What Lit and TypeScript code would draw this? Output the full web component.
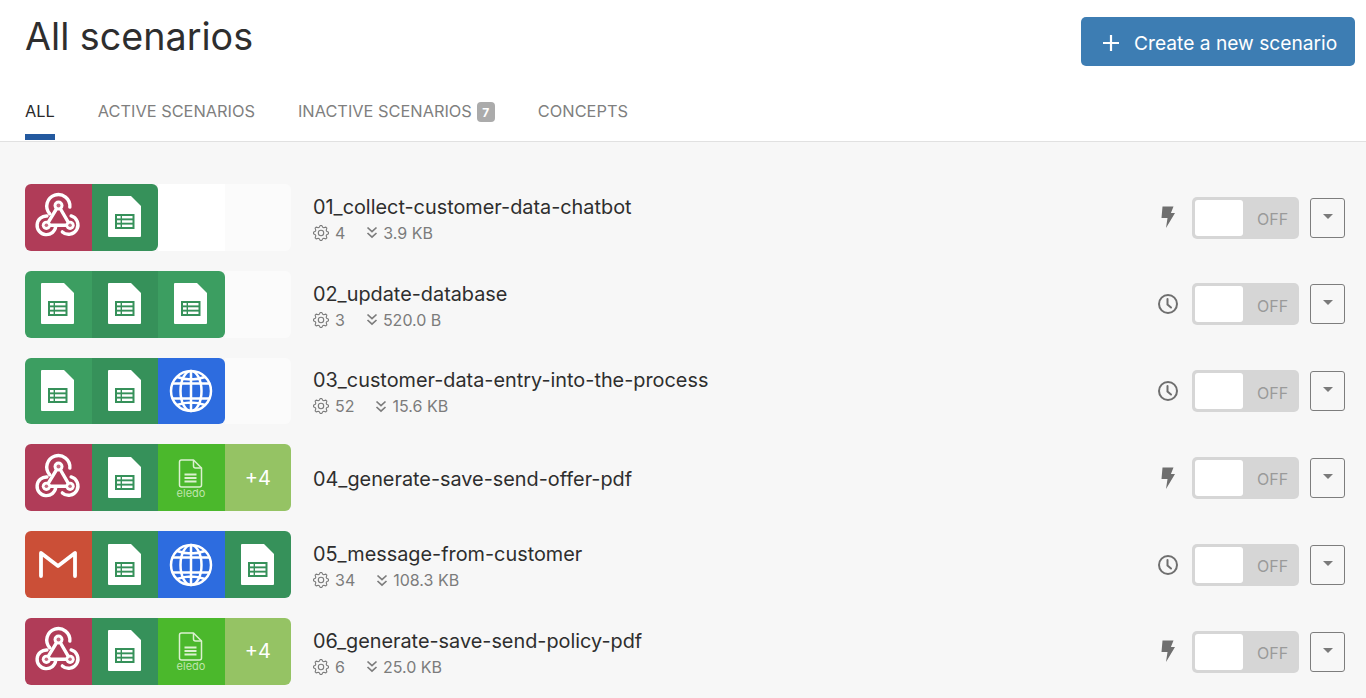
import { LitElement, css, html, svg } from "lit";
import { customElement } from "lit/decorators.js";

type Tile = "hook" | "sheet" | "web" | "eledo" | "gmail" | "more" | "";

interface Scenario {
  name: string;
  tiles: Tile[];
  ops?: string;
  size?: string;
  trigger: "bolt" | "clock";
}

const scenarios: Scenario[] = [
  { name: "01_collect-customer-data-chatbot", tiles: ["hook", "sheet", "", ""], ops: "4", size: "3.9 KB", trigger: "bolt" },
  { name: "02_update-database", tiles: ["sheet", "sheet", "sheet", ""], ops: "3", size: "520.0 B", trigger: "clock" },
  { name: "03_customer-data-entry-into-the-process", tiles: ["sheet", "sheet", "web", ""], ops: "52", size: "15.6 KB", trigger: "clock" },
  { name: "04_generate-save-send-offer-pdf", tiles: ["hook", "sheet", "eledo", "more"], trigger: "bolt" },
  { name: "05_message-from-customer", tiles: ["gmail", "sheet", "web", "sheet"], ops: "34", size: "108.3 KB", trigger: "clock" },
  { name: "06_generate-save-send-policy-pdf", tiles: ["hook", "sheet", "eledo", "more"], ops: "6", size: "25.0 KB", trigger: "bolt" },
];

const icons: Record<string, unknown> = {
  hook: svg`<g transform="translate(28.500 27.500) scale(1.1) translate(-28.500 -27)">
    <g fill="none" stroke="#fff" stroke-width="3.100" stroke-linecap="round">
      <path d="M20.500 24.500A10.500 10.500 0 1 1 38.800 18.500"/>
      <path d="M28.500 17L39 35"/>
      <path d="M28.500 17L17.500 35"/>
      <path d="M17.500 35H39"/>
      <path d="M18 26.500A8.500 8.500 0 1 0 26 36"/>
      <path d="M40 26.500A8.500 8.500 0 1 1 32 41"/>
    </g>
    <g fill="#fff"><circle cx="28.500" cy="17" r="4.500"/><circle cx="17.500" cy="35" r="4.200"/><circle cx="39" cy="35" r="4.200"/></g>
    <g fill="#c66a80"><circle cx="28.500" cy="17" r="1.800"/><circle cx="17.500" cy="35" r="1.600"/><circle cx="39" cy="35" r="1.600"/></g>
  </g>`,
  sheet: svg`<path d="M12 7h22l10 10v30a1 1 0 0 1-1 1H12a1 1 0 0 1-1-1V8a1 1 0 0 1 1-1z" fill="#fff"/>
  <rect x="18" y="25" width="19.500" height="15" fill="#36915a"/>
  <g fill="#fff"><rect x="20" y="27" width="3.600" height="2.400"/><rect x="25" y="27" width="10.500" height="2.400"/><rect x="20" y="31.300" width="3.600" height="2.400"/><rect x="25" y="31.300" width="10.500" height="2.400"/><rect x="20" y="35.600" width="3.600" height="2.400"/><rect x="25" y="35.600" width="10.500" height="2.400"/></g>`,
  web: svg`<g fill="none" stroke="#fff" stroke-width="2.500">
    <circle cx="28" cy="28" r="20"/>
    <ellipse cx="28" cy="28" rx="10.500" ry="20"/>
    <path d="M28 8v40M9 20.500h38M9 35.500h38M14 14q14 5 28 0M14 42q14-5 28 0"/>
  </g>`,
  eledo: svg`<g fill="none" stroke="#dcf1d0" stroke-width="1.500" stroke-linejoin="round">
    <path d="M18.500 10h12l8 8v17a2 2 0 0 1-2 2h-18a2 2 0 0 1-2-2V12a2 2 0 0 1 2-2z"/>
    <path d="M30.500 10v6a2 2 0 0 0 2 2h6"/>
    <path d="M21.500 24.500h12M21.500 28h12M21.500 31.500h12" stroke-width="1.800"/>
  </g>
  <text x="28" y="46.500" class="eledo-text" text-anchor="middle">eledo</text>`,
  gmail: svg`<path d="M11 39V16l17 13 17-13v23" fill="none" stroke="#fff" stroke-width="3.800" stroke-linecap="round" stroke-linejoin="round"/>`,
};

// scalloped gear outline for the operations count
function gearPath() {
  const pts: string[] = [];
  for (let i = 0; i < 32; i++) {
    const r = i % 4 < 2 ? 7.6 : 5.9;
    const a = ((i - 0.5) / 32) * Math.PI * 2;
    pts.push(`${(8 + r * Math.cos(a)).toFixed(2)} ${(8 + r * Math.sin(a)).toFixed(2)}`);
  }
  return `M${pts.join("L")}Z`;
}

@customElement("app-root")
export class AppRoot extends LitElement {
  static styles = css`
    :host {
      display: block;
      height: 698px;
      overflow: hidden;
      background: #f7f7f7;
      font-family: Inter, "Liberation Sans", sans-serif;
      color: #2e2e2e;
    }

    .head {
      background: #fff;
      border-bottom: 1px solid #e1e1e1;
      height: 142px;
      box-sizing: border-box;
      padding: 0 11px 0 25px;
    }

    .top {
      display: flex;
      justify-content: space-between;
      height: 89px;
    }

    h1 {
      margin: 13px 0 0;
      font-size: 37.7px;
      line-height: 46px;
      font-weight: 400;
    }

    .create {
      display: flex;
      align-items: center;
      box-sizing: border-box;
      margin-top: 17px;
      width: 274px;
      height: 49px;
      padding: 2px 0 0 21px;
      gap: 14px;
      border: 0;
      border-radius: 5px;
      background: #3d7db3;
      color: #fff;
      font: inherit;
      font-size: 19.2px;
    }

    .tabs {
      display: flex;
      gap: 43px;
      font-size: 16.37px;
      color: #7f7f7f;
    }

    .tab {
      display: flex;
      align-items: flex-start;
      height: 51px;
      box-sizing: border-box;
      padding-top: 13px;
      line-height: 19px;
    }

    .tab.on {
      color: #2a2a2a;
      border-bottom: 6px solid #23599f;
    }

    .count {
      margin-left: 5px;
      width: 18px;
      height: 20px;
      border-radius: 4px;
      background: #ababab;
      color: #fff;
      font-size: 12px;
      font-weight: 700;
      line-height: 21px;
      text-align: center;
    }

    .list {
      display: flex;
      flex-direction: column;
      gap: 20px;
      padding: 42px 21px 0 25px;
    }

    .row {
      display: flex;
      align-items: center;
      height: 66.8px;
    }

    .tiles {
      display: grid;
      grid-template-columns: repeat(4, 66.5px);
      height: 100%;
      margin-right: 22px;
      border-radius: 6px;
      overflow: hidden;
      flex: none;
    }

    .tile {
      position: relative;
      display: flex;
      align-items: center;
      justify-content: center;
      color: #fff;
      font-size: 20px;
    }

    .tile svg {
      width: 56px;
      height: 56px;
    }

    .eledo-text {
      font-size: 11px;
      fill: #bfe5ab;
    }

    .hook { background: #b03c58; }
    .sheet { background: #3c9e61; }
    .web { background: #2d6cdf; }
    .eledo { background: #4bb82c; }
    .gmail { background: #cb4f37; }
    .more { background: #95c364; }
    .blank { background: #fff; }
    .tile:nth-child(even).sheet { background: #36915a; }
    .tile:nth-child(even).blank { background: #fbfbfb; }
    .tile.round-end { border-radius: 0 6px 6px 0; }

    .info {
      flex: 1;
      min-width: 0;
      padding-top: 2px;
    }

    .name {
      font-size: 19.85px;
      line-height: 24px;
    }

    .meta {
      display: flex;
      align-items: center;
      margin: 2px 0 -3px;
      font-size: 16px;
      line-height: 24px;
      color: #7c7c7c;
    }

    .meta svg {
      flex: none;
    }

    .ops {
      margin-left: 6px;
      margin-right: 21px;
    }

    .size {
      margin-left: 5px;
    }

    .trigger {
      display: flex;
      justify-content: center;
      width: 22px;
      margin-right: 13px;
    }

    .switch {
      display: flex;
      align-items: center;
      box-sizing: border-box;
      width: 107px;
      height: 42px;
      margin-top: 0.4px;
      padding: 3px;
      border-radius: 5px;
      background: #d6d6d6;
      color: #9a9a9a;
      font-size: 16px;
    }

    .knob {
      width: 48px;
      height: 36px;
      border-radius: 3px;
      background: #fff;
    }

    .off {
      margin-left: 14px;
      margin-top: 3px;
    }

    .menu {
      display: flex;
      align-items: center;
      justify-content: center;
      box-sizing: border-box;
      width: 35px;
      height: 40px;
      margin: 0.4px 0 0 11px;
      padding: 0 0 3px;
      border: 1px solid #7d7d7d;
      border-radius: 3px;
      background: transparent;
    }

    .caret {
      width: 0;
      height: 0;
      border-left: 5px solid transparent;
      border-right: 5px solid transparent;
      border-top: 5px solid #7a7a7a;
    }
  `;

  renderTile(tile: Tile, i: number, tiles: Tile[]) {
    // the rounded end of the filled part sits on the last tile that has an icon
    const lastFilled = tile !== "" && tiles[i + 1] === "";
    const cls = `tile ${tile || "blank"} ${lastFilled ? "round-end" : ""}`;
    if (tile === "more") return html`<div class=${cls}>+4</div>`;
    if (tile === "") return html`<div class=${cls}></div>`;
    return html`<div class=${cls}><svg viewBox="0 0 56 56">${icons[tile]}</svg></div>`;
  }

  renderTrigger(kind: "bolt" | "clock") {
    if (kind === "bolt") {
      return html`<svg width="16" height="24" viewBox="0 0 16 24"><path d="M2.500 1.500h11l-2.600 6.500H15L6 23l1.500-10H1.500z" fill="#6f6f6f"/></svg>`;
    }
    return html`<svg width="20" height="20" viewBox="0 0 20 20" fill="none" stroke="#6f6f6f" stroke-width="2"><circle cx="10" cy="10" r="9"/><path d="M9.500 5v5.500l3.500 3" stroke-linecap="round"/></svg>`;
  }

  renderRow(s: Scenario) {
    return html`
      <div class="row">
        <div class="tiles">${s.tiles.map((t, i) => this.renderTile(t, i, s.tiles))}</div>
        <div class="info">
          <div class="name">${s.name}</div>
          ${s.ops
            ? html`<div class="meta">
                <svg width="16" height="16" viewBox="0 0 16 16" fill="none" stroke="#7c7c7c" stroke-width="1.100" stroke-linejoin="round"><path d=${gearPath()}/><circle cx="8" cy="8" r="2.700"/></svg>
                <span class="ops">${s.ops}</span>
                <svg width="12" height="13" viewBox="0 0 12 13" fill="none" stroke="#7c7c7c" stroke-width="1.700"><path d="M1.500 1.500L6 5.700l4.500-4.200M1.500 7L6 11.200 10.500 7"/></svg>
                <span class="size">${s.size}</span>
              </div>`
            : ""}
        </div>
        <div class="trigger">${this.renderTrigger(s.trigger)}</div>
        <div class="switch"><div class="knob"></div><span class="off">OFF</span></div>
        <button class="menu"><span class="caret"></span></button>
      </div>
    `;
  }

  render() {
    return html`
      <div class="head">
        <div class="top">
          <h1>All scenarios</h1>
          <button class="create">
            <svg width="18" height="18" viewBox="0 0 18 18"><path d="M9 1v16M1 9h16" stroke="#fff" stroke-width="2.200"/></svg>
            Create a new scenario
          </button>
        </div>
        <div class="tabs">
          <div class="tab on">ALL</div>
          <div class="tab">ACTIVE SCENARIOS</div>
          <div class="tab">INACTIVE SCENARIOS<span class="count">7</span></div>
          <div class="tab">CONCEPTS</div>
        </div>
      </div>
      <div class="list">${scenarios.map((s) => this.renderRow(s))}</div>
    `;
  }
}
